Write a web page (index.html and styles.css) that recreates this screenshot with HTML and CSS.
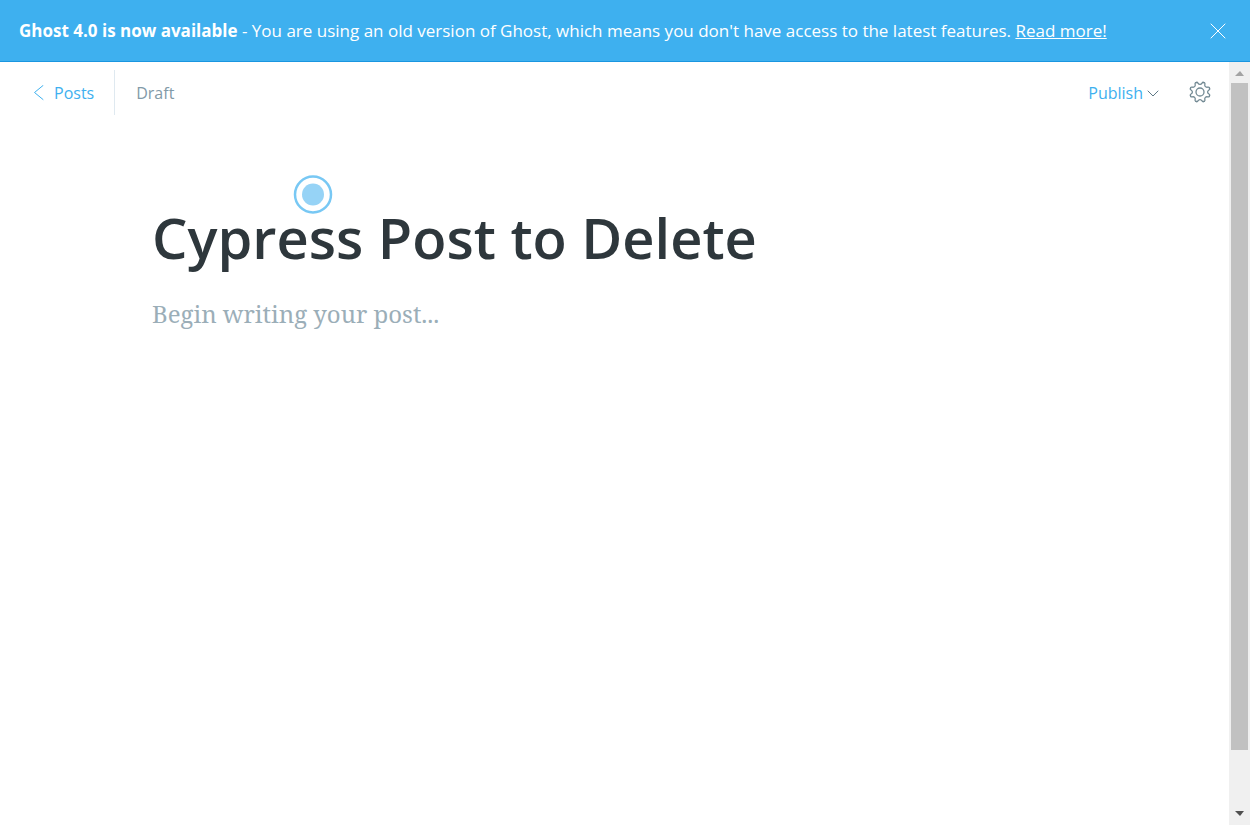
FILE: index.html
```html
<!DOCTYPE html>
<html lang="en">
<head>
<meta charset="utf-8">
<title>Ghost Editor</title>
<link rel="stylesheet" href="styles.css">
</head>
<body>
<div class="app">
  <aside class="alert">
    <p class="alert-text"><strong>Ghost 4.0 is now available</strong> - You are using an old version of Ghost, which means you don't have access to the latest features. <a href="#">Read more!</a></p>
    <button class="alert-close" aria-label="Close">
      <svg width="16" height="16" viewBox="0 0 16 16"><path d="M1 1l14 14M15 1L1 15"/></svg>
    </button>
  </aside>
  <div class="viewport">
    <main class="editor">
      <header class="toolbar">
        <a class="back" href="#">
          <svg width="10" height="16" viewBox="0 0 10 16"><path d="M9 .5L.5 7.500l8.500 7"/></svg>
          <span>Posts</span>
        </a>
        <span class="status">Draft</span>
        <div class="actions">
          <button class="publish">Publish
            <svg width="12" height="10" viewBox="0 0 12 10"><path d="M1 3l5 5 5-5"/></svg>
          </button>
          <button class="settings" aria-label="Settings">
            <svg width="22" height="24" viewBox="-11 -11 22 24">
              <defs><path id="tooth" d="M-3.98-9.4L-3.4-9.7C-1.800-10.2-2.400-7.6 0-7.6S1.800-10.2 3.4-9.7L3.98-9.4"/></defs>
              <use href="#tooth"/>
              <use href="#tooth" transform="rotate(45)"/>
              <use href="#tooth" transform="rotate(90)"/>
              <use href="#tooth" transform="rotate(135)"/>
              <use href="#tooth" transform="rotate(180)"/>
              <use href="#tooth" transform="rotate(225)"/>
              <use href="#tooth" transform="rotate(270)"/>
              <use href="#tooth" transform="rotate(315)"/>
              <circle r="4"/>
            </svg>
          </button>
        </div>
      </header>
      <section class="document">
        <input class="title" type="text" aria-label="Post title" value="Cypress Post to Delete">
        <textarea class="body" aria-label="Post content" placeholder="Begin writing your post..."></textarea>
        <svg class="beacon" width="40" height="40" viewBox="0 0 40 40"><circle class="ring" cx="20" cy="20.5" r="18"/><circle class="dot" cx="20" cy="20.5" r="11"/></svg>
      </section>
    </main>
    <div class="scrollbar" aria-hidden="true">
      <svg class="arrow-up" width="21" height="21" viewBox="0 0 21 21"><path d="M6 14l5-5 4 5z"/></svg>
      <div class="track"><div class="thumb"></div></div>
      <svg class="arrow-down" width="21" height="21" viewBox="0 0 21 21"><path d="M6 7h9l-4 5z"/></svg>
    </div>
  </div>
</div>
</body>
</html>
```
FILE: styles.css
```css
* { box-sizing: border-box; }
body { margin: 0; background: #fff; color: #2e373c; font-family: "Segoe UI", "Open Sans", "Noto Sans", sans-serif; }
button { padding: 0; border: 0; background: none; font: inherit; cursor: pointer; }
svg { display: block; fill: none; stroke: currentColor; stroke-linecap: round; stroke-linejoin: round; }
.app { display: flex; flex-direction: column; height: 100vh; }
.alert { display: flex; align-items: center; justify-content: space-between; padding: 18px 24px 18px 19px; border-bottom: 1px solid #1a96e0; background: #3eb0ef; color: #fff; }
.alert-text { margin: 0; font-size: 17px; line-height: 25px; white-space: nowrap; }
.alert a { color: inherit; }
.alert-close { color: #fff; }
.viewport { display: flex; flex: 1; min-height: 0; }
.editor { flex: 1; min-width: 0; }
.toolbar { display: flex; align-items: center; padding: 8px 18px 0 34px; font-size: 16px; line-height: 24px; color: #738a94; }
.back { display: flex; align-items: center; gap: 10px; height: 45px; padding-right: 20px; border-right: 1px solid #dfe9f0; color: #3eb0ef; text-decoration: none; }
.status { margin-left: 21px; color: #829aa8; }
.actions { display: flex; align-items: center; gap: 30px; margin-left: auto; }
.publish { display: flex; align-items: center; gap: 4px; color: #3eb0ef; }
.publish svg { color: #5d7885; }
.settings { color: #738a94; }
.settings svg { stroke-width: 1.3; }
.document { position: relative; padding: 82px 152px 0; }
.title { display: block; width: 100%; height: 80px; padding: 0; border: 0; outline: 0; background: none; color: #2e373c; font: 600 56px "Segoe UI", "Open Sans", "Noto Sans", sans-serif; }
.body { display: block; width: 100%; height: 160px; margin-top: 18px; padding: 0; border: 0; outline: 0; resize: none; background: none; font: 24px/38px Georgia, "Noto Serif", "Liberation Serif", serif; }
.body::placeholder { color: #9baeb8; opacity: 1; }
.beacon { position: absolute; top: 59px; left: 293px; stroke: none; }
.ring { stroke: #78c8f4; stroke-width: 2.5; }
.dot { fill: #96d3f6; }
.scrollbar { display: flex; flex-direction: column; width: 21px; background: #f0f0f0; }
.scrollbar svg { stroke: none; }
.arrow-up { fill: #a3a3a3; }
.arrow-down { fill: #505050; }
.track { flex: 1; }
.thumb { width: 17px; height: 92.5%; margin-left: 2px; background: #c1c1c1; }
```
